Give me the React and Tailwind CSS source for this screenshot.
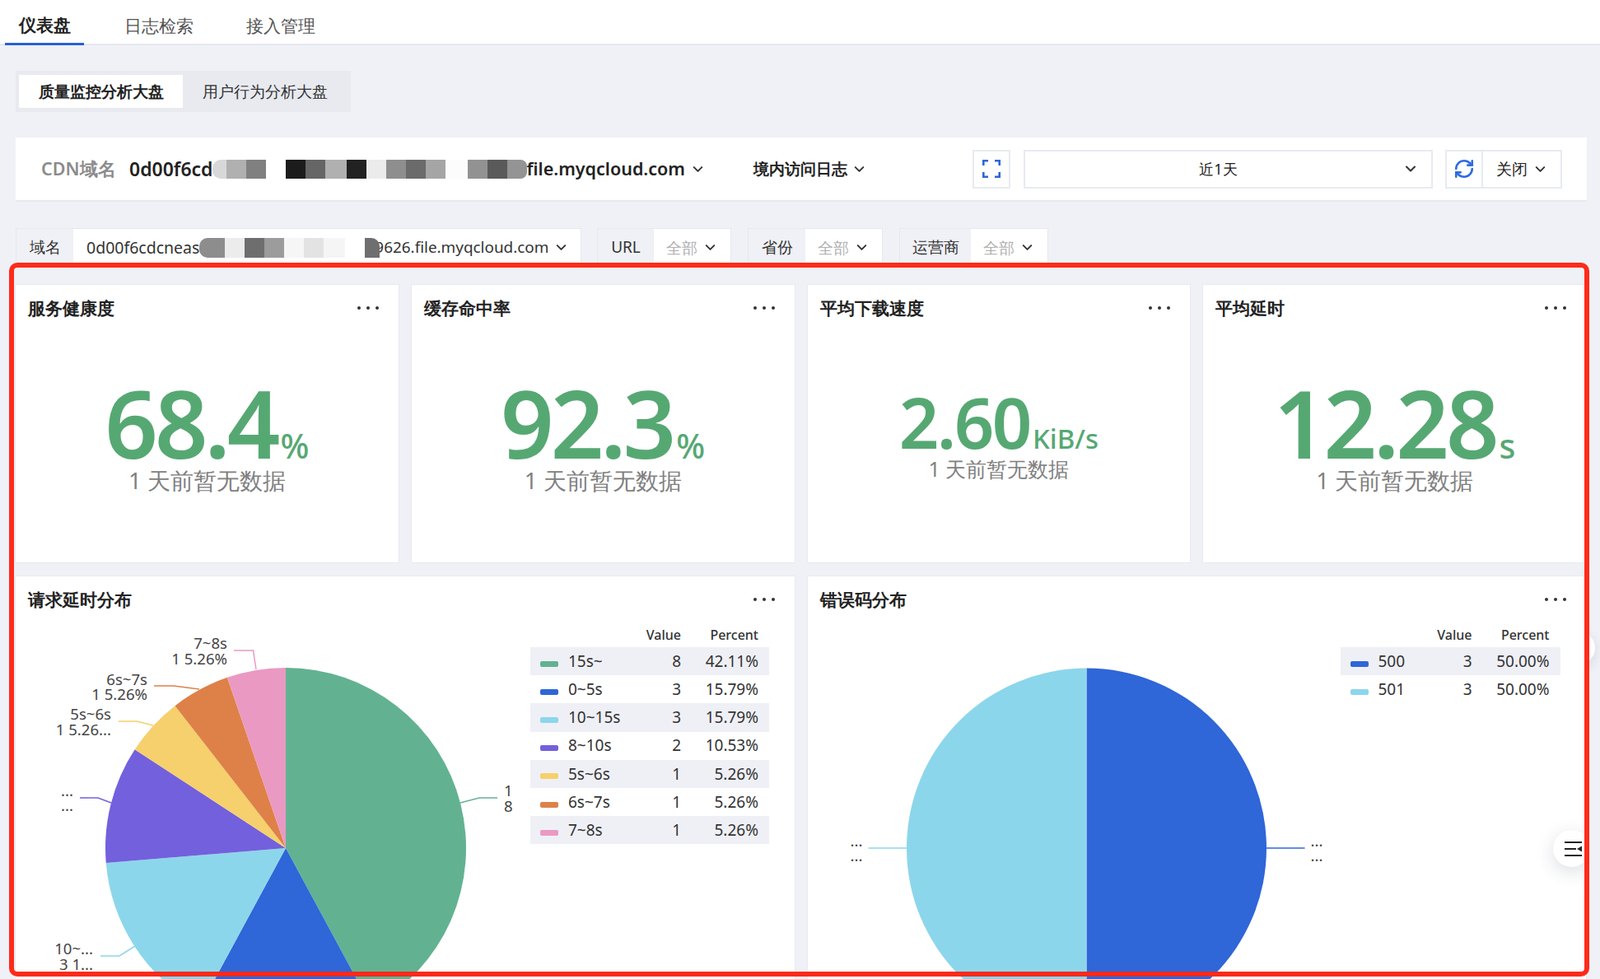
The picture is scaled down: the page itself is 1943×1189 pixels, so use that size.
import React from 'react';
import { ChevronDown, RefreshCw } from 'lucide-react';

const SANS = "font-['Inter','Noto_Sans_CJK_SC',sans-serif]";
const cx = (a, r, x) => x + r * Math.sin(a);
const cy = (a, r, y) => y - r * Math.cos(a);

function Pie({ x, y, r, slices }) {
  const total = slices.reduce((s, v) => s + v.v, 0);
  let a = 0;
  return slices.map((s) => {
    const b = a + (s.v / total) * Math.PI * 2;
    const large = b - a > Math.PI ? 1 : 0;
    const d = `M${x} ${y}L${cx(a, r, x)} ${cy(a, r, y)}A${r} ${r} 0 ${large} 1 ${cx(b, r, x)} ${cy(b, r, y)}Z`;
    a = b;
    return <path key={s.c} d={d} fill={s.c} />;
  });
}

const latency = [
  { v: 8, c: '#62b292' },
  { v: 3, c: '#2f66d8' },
  { v: 3, c: '#8cd6eb' },
  { v: 2, c: '#7360dc' },
  { v: 1, c: '#f6d06c' },
  { v: 1, c: '#de8148' },
  { v: 1, c: '#ea99c2' },
];
const errors = [
  { v: 3, c: '#2f66d8' },
  { v: 3, c: '#8cd6eb' },
];

const latencyRows = [
  ['15s~', '8', '42.11%', 'bg-[#62b292]'],
  ['0~5s', '3', '15.79%', 'bg-[#2f66d8]'],
  ['10~15s', '3', '15.79%', 'bg-[#8cd6eb]'],
  ['8~10s', '2', '10.53%', 'bg-[#7360dc]'],
  ['5s~6s', '1', '5.26%', 'bg-[#f6d06c]'],
  ['6s~7s', '1', '5.26%', 'bg-[#de8148]'],
  ['7~8s', '1', '5.26%', 'bg-[#ea99c2]'],
];
const errorRows = [
  ['500', '3', '50.00%', 'bg-[#2f66d8]'],
  ['501', '3', '50.00%', 'bg-[#8cd6eb]'],
];

const mosaicTop = [
  'w-[17px] bg-[#d8d8d8] rounded-l-[10px]', 'w-[24px] bg-[#b0b0b0]', 'w-[24px] bg-[#808080]', 'w-[24px] bg-white',
  'w-[24px] bg-[#1c1c1c]', 'w-[24px] bg-[#666666]', 'w-[26px] bg-[#b0b0b0]', 'w-[24px] bg-[#222222]',
  'w-[24px] bg-[#ebebeb]', 'w-[24px] bg-[#8e8e8e]', 'w-[24px] bg-[#6b6b6b]', 'w-[24px] bg-[#a5a5a5]',
  'w-[27px] bg-[#fcfcfc]', 'w-[24px] bg-[#929292]', 'w-[24px] bg-[#5a5a5a]', 'w-[24px] bg-[#949494] rounded-r-[8px]',
];
const mosaicFilter = [
  'w-[31px] bg-[#8d8d8d] rounded-l-[10px]', 'w-[24px] bg-[#ececec]', 'w-[24px] bg-[#6e6e6e]', 'w-[24px] bg-[#9c9c9c]',
  'w-[24px] bg-[#f6f6f6]', 'w-[24px] bg-[#e3e3e3]', 'w-[26px] bg-[#f5f5f5]', 'w-[24px] bg-white',
  'w-[18px] bg-[#6f6f6f] rounded-tr-[10px]',
];

function Mosaic({ cells, h }) {
  return (
    <div className={`flex shrink-0 relative z-10 ${h}`}>
      {cells.map((c, i) => (
        <div key={i} className={`h-full ${c}`} />
      ))}
    </div>
  );
}

function Dots() {
  return (
    <div className="flex gap-[7px]">
      <span className="w-[4px] h-[4px] rounded-full bg-[#333]" />
      <span className="w-[4px] h-[4px] rounded-full bg-[#333]" />
      <span className="w-[4px] h-[4px] rounded-full bg-[#333]" />
    </div>
  );
}

function CardHead({ title }) {
  return (
    <div className="h-[56px] flex items-center justify-between pl-[15px] pr-[24px] shrink-0">
      <span className="text-[21.3px] font-semibold text-[#222]">{title}</span>
      <Dots />
    </div>
  );
}

function Stat({ title, value, unit, small }) {
  return (
    <div className="bg-white border border-[#e8eaf1] h-[339px] flex flex-col">
      <CardHead title={title} />
      <div className={`flex flex-col items-center ${small ? 'pt-[68px]' : 'pt-[59px]'}`}>
        <div className="flex items-baseline text-[#56a873] font-['Roboto',sans-serif] font-semibold">
          {small ? (
            <>
              <span className="text-[85px] leading-[84px] tracking-[-2.5px]">{value}</span>
              <span className="text-[33px] leading-[40px] font-medium ml-[3px]">{unit}</span>
            </>
          ) : (
            <>
              <span className="text-[113px] leading-[104px] tracking-[-4px]">{value}</span>
              <span className="text-[41px] leading-[50px] font-medium ml-[4px]">{unit}</span>
            </>
          )}
        </div>
        <div className={small ? 'text-[25px] leading-[30px] text-[#808080]' : 'text-[27.6px] leading-[34px] text-[#808080]'}>
          1 天前暂无数据
        </div>
      </div>
    </div>
  );
}

function Legend({ rows, width }) {
  return (
    <div className={`${width} shrink-0`}>
      <div className="h-[30px] flex items-center justify-end text-[16px] font-medium text-[#333] pr-[13px]">
        <span>Value</span>
        <span className="w-[94px] text-right">Percent</span>
      </div>
      {rows.map((r, i) => (
        <div
          key={r[0]}
          className={`h-[34.2px] flex items-center pl-[12px] pr-[13px] text-[19px] text-[#333] ${i % 2 === 0 ? 'bg-[#eff0f6]' : ''}`}
        >
          <span className={`w-[22px] h-[7px] rounded-[2px] mt-[6px] shrink-0 ${r[3]}`} />
          <span className="ml-[12px] flex-1">{r[0]}</span>
          <span className="text-right">{r[1]}</span>
          <span className="w-[94px] text-right">{r[2]}</span>
        </div>
      ))}
    </div>
  );
}

function Leader({ points, color }) {
  return <polyline points={points} fill="none" stroke={color} strokeWidth="1.5" />;
}

function Label({ x, y, anchor = 'end', children }) {
  return (
    <text x={x} y={y} textAnchor={anchor} className={`${SANS} text-[18.6px] fill-[#444]`} dominantBaseline="middle">
      {children}
    </text>
  );
}

function FilterChip({ label, labelW, valueW, value }) {
  return (
    <div className="flex border border-[#e6e8ef] border-b-0 h-[43px]">
      <div className={`${labelW} flex items-center justify-center pt-[3px] text-[19px] text-[#333] bg-[#eff1f6]`}>{label}</div>
      <div className={`${valueW} flex items-center bg-white pl-[15px] pt-[3px] text-[18.5px] text-[#b0b0b0]`}>
        <span>{value}</span>
        <ChevronDown size={19} strokeWidth={2.5} className="text-[#333] ml-[6px]" />
      </div>
    </div>
  );
}

export default function App() {
  return (
    <div className={`relative w-[1943px] h-[1189px] overflow-hidden bg-[#eff1f6] ${SANS} text-[#222]`}>
      <header className="h-[55px] bg-white border-b-2 border-[#e6e8ee] flex gap-[33px] pl-[6px]">
        <div className="h-[55px] -mb-[2px] px-[16px] pt-[10px] flex items-center text-[21px] font-semibold text-[#222] border-b-[3px] border-[#2a5fd6] w-[96px] justify-center">
          仪表盘
        </div>
        <div className="h-[53px] px-[16px] pt-[10px] flex items-center text-[21px] text-[#555]">日志检索</div>
        <div className="h-[53px] px-[16px] pt-[10px] flex items-center text-[21px] text-[#555] -ml-[1px]">接入管理</div>
      </header>

      <main className="pl-[19px] pr-[16px]">
        <div className="mt-[31px] w-[407px] h-[50px] bg-[#e8eaf0] px-[4px] py-[5px] flex">
          <div className="w-[199px] h-full bg-white flex items-center justify-center text-[18.6px] font-semibold text-[#222]">
            质量监控分析大盘
          </div>
          <div className="w-[199px] h-full flex items-center justify-center text-[18.6px] font-medium text-[#333]">
            用户行为分析大盘
          </div>
        </div>

        <div className="mt-[31px] h-[78px] bg-white border-b-2 border-[#e8eaf1] flex items-center pl-[31px]">
          <div className="w-[107px] shrink-0 text-[21.5px] font-semibold text-[#8b8b8b]">CDN域名</div>
          <div className="w-[758px] shrink-0 flex items-center font-semibold text-[#222]">
            <span className="text-[23px]">0d00f6cd</span>
            <Mosaic cells={mosaicTop} h="h-[23px] -ml-[1px]" />
            <span className="text-[21.5px]">file.myqcloud.com</span>
            <ChevronDown size={19} strokeWidth={2.5} className="ml-[6px] text-[#333]" />
          </div>
          <div className="w-[266px] shrink-0 flex items-center text-[18.5px] font-semibold text-[#222]">
            <span>境内访问日志</span>
            <ChevronDown size={19} strokeWidth={2.5} className="ml-[5px] text-[#333]" />
          </div>
          <div className="w-[46px] h-[47px] border-2 border-[#e8eaf1] flex items-center justify-center shrink-0">
            <svg width="22" height="22" viewBox="0 0 22 22" fill="none" stroke="#2f66d8" strokeWidth="2.6">
              <path d="M1.3 7V1.3H7M15 1.3h5.7V7M20.7 15v5.7H15M7 20.7H1.3V15" />
            </svg>
          </div>
          <div className="relative ml-[16px] w-[497px] h-[47px] border-2 border-[#e8eaf1] pr-[24px] flex items-center justify-center text-[18px] text-[#222] shrink-0">
            <span>近1天</span>
            <ChevronDown size={20} strokeWidth={2.5} className="absolute right-[15px] text-[#333]" />
          </div>
          <div className="ml-[15px] w-[142px] h-[47px] border-2 border-[#e8eaf1] flex items-center shrink-0">
            <div className="w-[44px] h-full border-r-2 border-[#e8eaf1] flex items-center justify-center">
              <RefreshCw size={26} strokeWidth={2.4} className="text-[#2f6be0]" />
            </div>
            <span className="ml-[16px] text-[18.5px] text-[#222]">关闭</span>
            <ChevronDown size={19} strokeWidth={2.5} className="ml-[6px] text-[#333]" />
          </div>
        </div>

        <div className="mt-[32px] h-[43px] flex">
          <div className="flex border border-[#e6e8ef] border-b-0 h-[43px] w-[687px]">
            <div className="w-[69px] flex items-center justify-center pt-[3px] text-[19px] text-[#333] bg-[#eff1f6]">域名</div>
            <div className="flex-1 flex items-center bg-white pl-[16px] pt-[3px] text-[19.5px] text-[#333]">
              <span>0d00f6cdcneas</span>
              <Mosaic cells={mosaicFilter} h="h-[24px]" />
              <span className="-ml-[6px] text-[18.9px]">9626.file.myqcloud.com</span>
              <ChevronDown size={19} strokeWidth={2.5} className="ml-[6px]" />
            </div>
          </div>
          <div className="ml-[19px]"><FilterChip label="URL" labelW="w-[68px]" valueW="w-[93px]" value="全部" /></div>
          <div className="ml-[20px]"><FilterChip label="省份" labelW="w-[69px]" valueW="w-[93px]" value="全部" /></div>
          <div className="ml-[20px]"><FilterChip label="运营商" labelW="w-[86px]" valueW="w-[93px]" value="全部" /></div>
        </div>

        <div className="mt-[25px] -ml-[1px] grid grid-cols-4 gap-[14px]">
          <Stat title="服务健康度" value="68.4" unit="%" />
          <Stat title="缓存命中率" value="92.3" unit="%" />
          <Stat title="平均下载速度" value="2.60" unit="KiB/s" small />
          <Stat title="平均延时" value="12.28" unit="s" />
        </div>

        <div className="mt-[15px] -ml-[1px] grid grid-cols-2 gap-[14px]">
          <div className="bg-white border border-[#e8eaf1] h-[520px] flex flex-col">
            <CardHead title="请求延时分布" />
            <div className="flex">
              <svg width="625" height="440" className="shrink-0">
                <g transform="translate(-19 -756)">
                  <Pie x={347} y={1030} r={219} slices={latency} />
                  <Leader points="284,790 307.5,790 311,813" color="#ea99c2" />
                  <Leader points="187,833 211,833 242,837" color="#de8148" />
                  <Leader points="144,876 166,876 186,881" color="#f6d06c" />
                  <Leader points="97,969 119,969 135,975" color="#7360dc" />
                  <Leader points="604,969 582,969 559,975" color="#62b292" />
                  <Leader points="122,1161 145,1161 164,1149" color="#8cd6eb" />
                  <Label x={276} y={783}>7~8s</Label>
                  <Label x={276} y={802}>1 5.26%</Label>
                  <Label x={179} y={827}>6s~7s</Label>
                  <Label x={179} y={845}>1 5.26%</Label>
                  <Label x={135} y={869}>5s~6s</Label>
                  <Label x={135} y={888}>1 5.26...</Label>
                  <Label x={89} y={962}>...</Label>
                  <Label x={89} y={980}>...</Label>
                  <Label x={612} y={962} anchor="start">1</Label>
                  <Label x={612} y={981} anchor="start">8</Label>
                  <Label x={113} y={1154}>10~...</Label>
                  <Label x={113} y={1173}>3 1...</Label>
                </g>
              </svg>
              <Legend rows={latencyRows} width="w-[290px]" />
            </div>
          </div>

          <div className="bg-white border border-[#e8eaf1] h-[520px] flex flex-col">
            <CardHead title="错误码分布" />
            <div className="flex">
              <svg width="647" height="440" className="shrink-0">
                <g transform="translate(-980.5 -756)">
                  <Pie x={1319} y={1030} r={218.5} slices={errors} />
                  <Leader points="1054,1030 1101,1030" color="#8cd6eb" />
                  <Leader points="1537,1030 1584,1030" color="#2f66d8" />
                  <Label x={1047} y={1023}>...</Label>
                  <Label x={1047} y={1041}>...</Label>
                  <Label x={1591} y={1023} anchor="start">...</Label>
                  <Label x={1591} y={1041} anchor="start">...</Label>
                </g>
              </svg>
              <Legend rows={errorRows} width="w-[267px]" />
            </div>
          </div>
        </div>
      </main>

      <div className="absolute left-[1930px] top-[750px] w-[13px] h-[90px] overflow-hidden">
        <div className="-ml-[33px] mt-[17px] w-[40px] h-[40px] rounded-full bg-white shadow-[0_4px_14px_rgba(40,50,90,0.12)]" />
      </div>

      <div className="absolute left-[1846px] top-[968px] w-[78px] h-[125px] overflow-hidden">
        <div className="ml-[40px] mt-[40px] w-[45px] h-[45px] rounded-full bg-white shadow-[0_6px_22px_rgba(40,50,90,0.16)] flex items-center pl-[14px]">
          <svg width="22" height="22" viewBox="0 0 22 22" className="shrink-0">
            <path d="M0 3h21M0 11h14M0 19h21" stroke="#222" strokeWidth="2.2" />
            <path d="M15 11l6-3.5v7z" fill="#222" />
          </svg>
        </div>
      </div>

      <div className="absolute left-[11px] top-[319px] w-[1919px] h-[867px] border-[6px] border-[#ff2a1a] rounded-[10px] pointer-events-none" />
    </div>
  );
}
